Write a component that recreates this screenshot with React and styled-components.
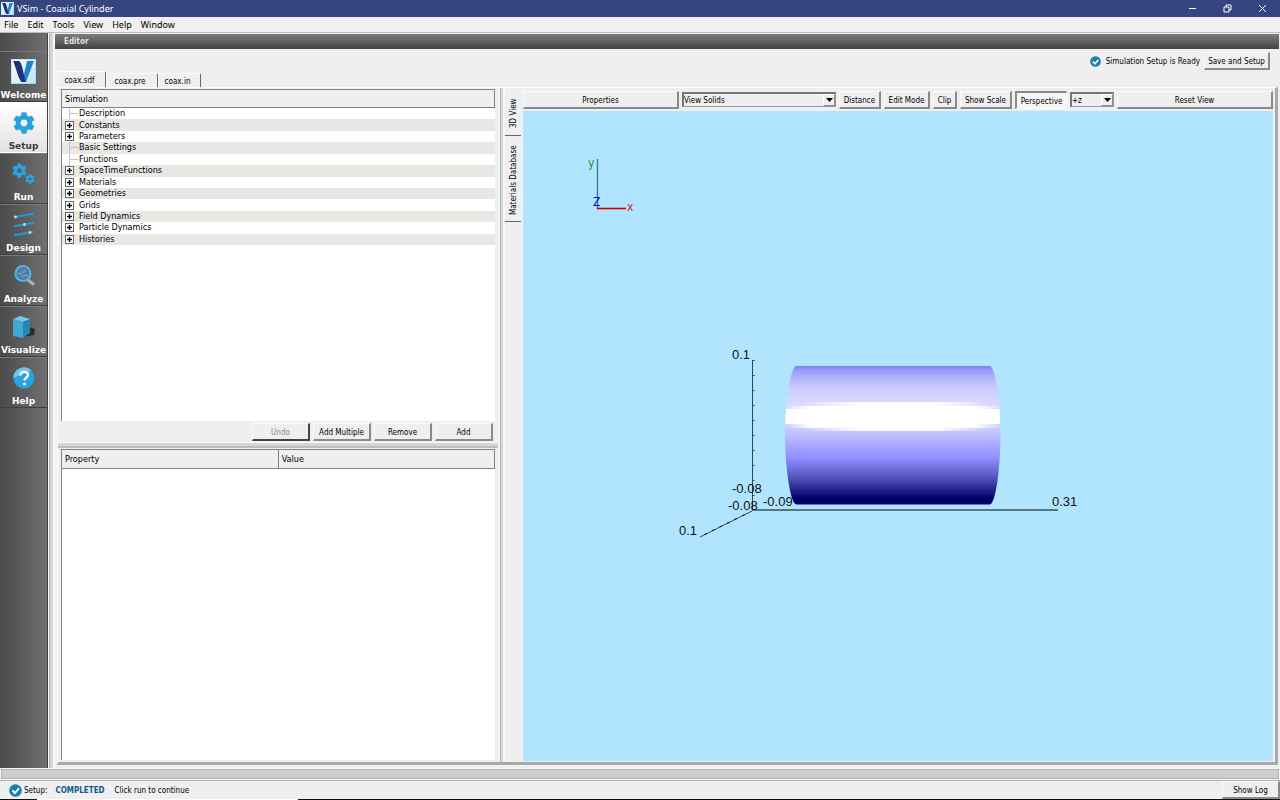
import React, { useState } from "react";
import styled, { createGlobalStyle, css } from "styled-components";
import { FaCog } from "react-icons/fa";

const sideItems = ["Welcome", "Setup", "Run", "Design", "Analyze", "Visualize", "Help"];

const treeItems = [
  { name: "Description" },
  { name: "Constants", expandable: true },
  { name: "Parameters", expandable: true },
  { name: "Basic Settings" },
  { name: "Functions" },
  { name: "SpaceTimeFunctions", expandable: true },
  { name: "Materials", expandable: true },
  { name: "Geometries", expandable: true },
  { name: "Grids", expandable: true },
  { name: "Field Dynamics", expandable: true },
  { name: "Particle Dynamics", expandable: true },
  { name: "Histories", expandable: true },
];

const Logo = ({ size }) => (
  <svg width={size} height={size} viewBox="0 0 24 24">
    <defs>
      <linearGradient id="logoBg" x1="0" y1="0" x2="1" y2="1">
        <stop offset="0" stopColor="#ffffff" />
        <stop offset="1" stopColor="#b9e2f5" />
      </linearGradient>
    </defs>
    <rect width="24" height="24" fill="url(#logoBg)" stroke="#8fd0ee" />
    <path d="M15.500 2h6.500l-7.500 20h-4z" fill="#1b86cc" />
    <path d="M2 2h6c2 2 2.500 5 3.500 9l2.500 11h-4c-3-3-5-13-8-20z" fill="#23307c" />
  </svg>
);

const SideIcon = ({ name }) => {
  if (name === "Welcome") return <Logo size={25} />;
  if (name === "Setup") return <FaCog size={22} color="#29a3df" />;
  if (name === "Run")
    return (
      <GearPair>
        <FaCog size={15} />
        <FaCog size={10} />
      </GearPair>
    );
  if (name === "Design")
    return (
      <svg width="24" height="24" viewBox="0 0 24 24">
        <g stroke="#1f9bdb" strokeWidth="1.8" strokeLinecap="round">
          <path d="M3 4l18-3M3 13l18-3M3 22l18-3" />
        </g>
        <g fill="#d8d2cc">
          <circle cx="3.500" cy="4" r="1.400" />
          <circle cx="12.500" cy="11.500" r="1.400" />
          <circle cx="18" cy="19.500" r="1.400" />
        </g>
      </svg>
    );
  if (name === "Analyze")
    return (
      <svg width="24" height="24" viewBox="0 0 24 24">
        <path d="M15 15l6 5" stroke="#b5aea6" strokeWidth="3.200" strokeLinecap="round" />
        <circle cx="11" cy="9.500" r="7.500" fill="#5b7896" stroke="#4db8ee" strokeWidth="2" />
        <circle cx="11" cy="9.500" r="4" fill="none" stroke="#3d9ad0" strokeDasharray="3 2" />
        <path d="M6 9l4 1 3-4M9 13l4-2 3 1" stroke="#7fc4e8" fill="none" strokeWidth="0.8" />
      </svg>
    );
  if (name === "Visualize")
    return (
      <svg width="25" height="25" viewBox="0 0 25 25">
        <path d="M12 23l11-2 1-6-6-2z" fill="#2b2b2b" />
        <path d="M2 5l7-3 10 3-7 3z" fill="#6fcbf2" />
        <path d="M2 5l10 3v16l-10-2z" fill="#45a6d3" />
        <path d="M12 8l7-3v14l-7 5z" fill="#2585b3" />
      </svg>
    );
  return (
    <svg width="24" height="24" viewBox="0 0 24 24">
      <circle cx="12" cy="12" r="10.500" fill="#27a3e0" />
      <path d="M1.500 12a10.500 10.500 0 0 1 18-7.500z" fill="#6cc6f0" />
      <path d="M8.500 9.500c0-5 7.500-4.500 7.500-.5 0 2.500-3.500 2.500-3.500 5.500" fill="none" stroke="#fff" strokeWidth="2.400" />
      <circle cx="12.500" cy="18" r="1.500" fill="#fff" />
    </svg>
  );
};

const Check = ({ size }) => (
  <svg width={size} height={size} viewBox="0 0 12 12">
    <circle cx="6" cy="6" r="5.800" fill="#1c7fae" />
    <path d="M3.200 6l2.200 2.400 3.800-4.400" fill="none" stroke="#fff" strokeWidth="1.800" />
  </svg>
);

const Combo = ({ label, options, width }) => (
  <ComboBox $width={width}>
    <select aria-label={label}>
      {options.map((o) => (
        <option key={o}>{o}</option>
      ))}
    </select>
    <Arrow>
      <svg width="7" height="4" viewBox="0 0 7 4">
        <path d="M0 0h7l-3.500 4z" fill="#000" />
      </svg>
    </Arrow>
  </ComboBox>
);

const Scene = () => (
  <svg viewBox="0 0 750 650" width="100%" height="100%">
    <defs>
      <linearGradient id="shade" x1="0" y1="0" x2="0" y2="1">
        <stop offset="0" stopColor="#8080f4" />
        <stop offset="0.04" stopColor="#9e9efc" />
        <stop offset="0.1" stopColor="#b9b9fb" />
        <stop offset="0.18" stopColor="#cfcffd" />
        <stop offset="0.3" stopColor="#dcdcff" />
        <stop offset="0.44" stopColor="#ccccff" />
        <stop offset="0.52" stopColor="#b6b6ff" />
        <stop offset="0.66" stopColor="#9090ff" />
        <stop offset="0.78" stopColor="#5f5fc8" />
        <stop offset="0.88" stopColor="#2a2a90" />
        <stop offset="0.95" stopColor="#00006c" />
        <stop offset="1" stopColor="#000068" />
      </linearGradient>
      <linearGradient id="wide">
        <stop offset="0" stopColor="#fff" stopOpacity="0" />
        <stop offset="0.12" stopColor="#fff" />
        <stop offset="0.88" stopColor="#fff" />
        <stop offset="1" stopColor="#fff" stopOpacity="0" />
      </linearGradient>
      <linearGradient id="inner">
        <stop offset="0.08" stopColor="#fff" stopOpacity="0" />
        <stop offset="0.34" stopColor="#fff" />
        <stop offset="0.7" stopColor="#fff" />
        <stop offset="0.94" stopColor="#fff" stopOpacity="0" />
      </linearGradient>
      <clipPath id="body">
        <path d="M273 255H467C473 257 477.500 294 477.500 324S473 392 467 393.500H273C267 392 262 354 262 324S267 257 273 255Z" />
      </clipPath>
    </defs>
    {/* orientation marker */}
    <path d="M74.500 48v50" stroke="#3f7f78" strokeWidth="1.400" />
    <path d="M74 97.500h29" stroke="#d40000" strokeWidth="1.600" />
    <Axis x="65" y="56" fill="#129a2c">y</Axis>
    <Axis x="70" y="95" fill="#0a0ae0">Z</Axis>
    <Axis x="104" y="100" fill="#ee1616">x</Axis>
    {/* bounding axes */}
    <g stroke="#2f4a52" strokeWidth="1" fill="none">
      <path d="M229.500 249v150" />
      <path d="M229 399h306" stroke="#34545a" strokeWidth="1.400" />
      <path d="M229 400l-52 26" />
      {[0, 1, 2, 3, 4, 5, 6, 7, 8, 9].map((i) => (
        <path key={i} d={`M229 ${249.5 + i * 15}h2.500`} />
      ))}
      {[1, 2, 3, 4, 5, 6].map((i) => (
        <path key={i} d={`M${229 - i * 7.5} ${400 + i * 3.75}l-2.500 1`} stroke="#000" />
      ))}
    </g>
    <g clipPath="url(#body)">
      <rect x="262" y="255" width="216" height="139" fill="url(#shade)" />
      <rect x="262" y="298" width="216" height="15" fill="#fff" />
      <rect x="262" y="295" width="216" height="22" fill="url(#wide)" />
      <rect x="262" y="291" width="216" height="29" fill="url(#inner)" />
    </g>
    <Tick x="209" y="248">0.1</Tick>
    <Tick x="209" y="382">-0.08</Tick>
    <Tick x="205" y="399">-0.08</Tick>
    <Tick x="240" y="395">-0.09</Tick>
    <Tick x="529" y="395">0.31</Tick>
    <Tick x="156" y="424">0.1</Tick>
  </svg>
);

export default function App() {
  const [active, setActive] = useState("Setup");

  return (
    <>
      <GlobalStyle />
      <Window>
        <TitleBar>
          <Logo size={13} />
          <Title>VSim - Coaxial Cylinder</Title>
          <WinButton aria-label="Minimize">
            <svg width="9" height="9" viewBox="0 0 9 9"><path d="M1 4.500h7" /></svg>
          </WinButton>
          <WinButton aria-label="Restore">
            <svg width="9" height="9" viewBox="0 0 9 9"><path d="M1 3h5v5h-5zM3 3v-2h5v5h-2" /></svg>
          </WinButton>
          <WinButton aria-label="Close">
            <svg width="9" height="9" viewBox="0 0 9 9"><path d="M1 1l7 7M8 1l-7 7" /></svg>
          </WinButton>
        </TitleBar>
        <MenuBar>
          {["File", "Edit", "Tools", "View", "Help", "Window"].map((m) => (
            <MenuItem key={m}>{m}</MenuItem>
          ))}
        </MenuBar>
        <Body>
          <Sidebar>
            {sideItems.map((name) => (
              <SideButton key={name} $active={name === active} onClick={() => setActive(name)}>
                <IconBox>
                  <SideIcon name={name} />
                </IconBox>
                {name}
              </SideButton>
            ))}
          </Sidebar>
          <Splitter />
          <Main>
            <EditorBar>Editor</EditorBar>
            <ReadyRow>
              <Check size={11} />
              <ReadyText>Simulation Setup is Ready</ReadyText>
              <Button $width={66}>Save and Setup</Button>
            </ReadyRow>
            <FileTabs>
              <FileTab $width={49} $active>coax.sdf</FileTab>
              <FileTab $width={52}>coax.pre</FileTab>
              <FileTab $width={43}>coax.in</FileTab>
            </FileTabs>
            <Frame>
              <LeftPane>
                <TreeBox>
                  <TreeHeader>Simulation</TreeHeader>
                  <Tree>
                    {treeItems.map((item) => (
                      <TreeRow key={item.name}>
                        {item.expandable ? (
                          <Expander aria-label={`Expand ${item.name}`}>
                            <svg width="5" height="5" viewBox="0 0 5 5">
                              <path d="M0 2.500h5M2.500 0v5" stroke="#000" strokeWidth="1.400" />
                            </svg>
                          </Expander>
                        ) : (
                          <Branch />
                        )}
                        {item.name}
                      </TreeRow>
                    ))}
                  </Tree>
                </TreeBox>
                <ButtonRow>
                  <Button $width={58} disabled>Undo</Button>
                  <Button $width={58}>Add Multiple</Button>
                  <Button $width={58}>Remove</Button>
                  <Button $width={58}>Add</Button>
                </ButtonRow>
                <HSplitter />
                <PropertyBox>
                  <PropertyTable>
                    <thead>
                      <tr>
                        <th>Property</th>
                        <th>Value</th>
                      </tr>
                    </thead>
                  </PropertyTable>
                </PropertyBox>
              </LeftPane>
              <Splitter $narrow />
              <SideTabs>
                <SideTab $height={48}>3D View</SideTab>
                <SideTab $height={86}>Materials Database</SideTab>
              </SideTabs>
              <ViewPane>
                <Toolbar>
                  <Button $grow>Properties</Button>
                  <Combo label="View mode" options={["View Solids", "View Grid"]} width={154} />
                  <Button $width={42}>Distance</Button>
                  <Button $width={46}>Edit Mode</Button>
                  <Button $width={24}>Clip</Button>
                  <Button $width={52}>Show Scale</Button>
                  <Button $width={52} $pressed>Perspective</Button>
                  <Combo label="View direction" options={["+z", "-z"]} width={44} />
                  <Button $grow>Reset View</Button>
                </Toolbar>
                <Canvas>
                  <Scene />
                </Canvas>
              </ViewPane>
            </Frame>
          </Main>
        </Body>
        <LogSplitter />
        <StatusBar>
          <Check size={13} />
          <span>Setup:</span>
          <Completed>COMPLETED</Completed>
          <span>Click run to continue</span>
          <Button $width={58}>Show Log</Button>
        </StatusBar>
        <Taskbar />
      </Window>
    </>
  );
}

const GlobalStyle = createGlobalStyle`
  * {
    box-sizing: border-box;
  }
  body {
    margin: 0;
    overflow: hidden;
    background: #efefef;
  }
  body, button, select {
    font-family: "DejaVu Sans Condensed", "DejaVu Sans", sans-serif;
    font-size: 8px;
    color: #000;
  }
  svg {
    display: block;
    flex: none;
  }
`;

const Window = styled.div`
  display: flex;
  flex-direction: column;
  height: 100vh;
`;

const TitleBar = styled.header`
  display: flex;
  align-items: center;
  height: 17px;
  padding-left: 1px;
  background: #35457f;
  color: #fff;
`;

const Title = styled.h1`
  flex: 1;
  margin: 0 0 0 3px;
  font-family: "Noto Sans", sans-serif;
  font-size: 9px;
  font-weight: 400;
`;

const WinButton = styled.button`
  display: flex;
  align-items: center;
  justify-content: center;
  width: 35px;
  height: 17px;
  border: 0;
  background: transparent;

  path {
    fill: none;
    stroke: #fff;
  }
`;

const MenuBar = styled.nav`
  display: flex;
  align-items: center;
  gap: 9px;
  height: 16px;
  padding-left: 4px;
  background: #f0f0f0;
  border-bottom: 1px solid #bdbdbd;
`;

const MenuItem = styled.button`
  padding: 0;
  border: 0;
  background: transparent;
  font-family: "Noto Sans", sans-serif;
  font-size: 9px;
`;

const Body = styled.div`
  display: flex;
  flex: 1;
  min-height: 0;
`;

const Sidebar = styled.aside`
  width: 48px;
  padding-top: 18px;
  background: linear-gradient(90deg, #4a4a4a, #707070);
  border-right: 1px solid #404040;
`;

const SideButton = styled.button`
  display: flex;
  flex-direction: column;
  align-items: center;
  width: 47px;
  height: 51px;
  padding: 0;
  border: 0;
  border-top: 1px solid #7a7a7a;
  border-bottom: 1px solid #404040;
  background: transparent;
  color: #fff;
  font-family: "DejaVu Sans", sans-serif;
  font-size: 9px;
  font-weight: 700;
  line-height: 12px;

  ${(p) =>
    p.$active &&
    css`
      background: linear-gradient(#ffffff, #e2e2e2);
      border-color: #fff;
      color: #3c3c3c;
    `}
`;

const IconBox = styled.span`
  display: flex;
  align-items: center;
  justify-content: center;
  height: 38px;
  padding-top: 2px;
`;

const GearPair = styled.span`
  display: flex;
  align-items: flex-end;
  color: #29a3df;

  svg:first-child {
    margin: 0 -2px 6px 0;
  }
`;

const Splitter = styled.div`
  width: ${(p) => (p.$narrow ? 6 : 7)}px;
  border: solid #f8f8f8;
  border-width: 0 2px 0 1px;
  background: linear-gradient(90deg, #b4b4b4 1px, #d4d4d4 1px);
`;

const Main = styled.main`
  display: flex;
  flex: 1;
  flex-direction: column;
  min-width: 0;
  padding: 1px 1px 3px 0;
  background: #efefef;
`;

const EditorBar = styled.div`
  height: 15px;
  padding-left: 9px;
  background: linear-gradient(#7d7d7d, #434343);
  color: #e0e0e0;
  font-size: 8px;
  font-weight: 700;
  line-height: 16px;
`;

const Button = styled.button`
  flex: ${(p) => (p.$grow ? "1" : "none")};
  width: ${(p) => (p.$width ? p.$width + "px" : "auto")};
  height: 18px;
  padding: 2px 0 0;
  border: solid;
  border-width: 1px 2px 2px 1px;
  border-color: #fbfbfb #8a8a8a #8a8a8a #fbfbfb;
  background: #efefef;
  white-space: nowrap;

  &:disabled {
    color: #8c8c8c;
    border-right-color: #444;
    border-bottom-color: #444;
  }

  ${(p) =>
    p.$pressed &&
    css`
      border-width: 2px 1px 1px 2px;
      border-color: #8a8a8a #fbfbfb #fbfbfb #8a8a8a;
      background: #f6f6f6;
    `}
`;

const ReadyRow = styled.div`
  display: flex;
  align-items: center;
  justify-content: flex-end;
  height: 24px;
  padding-right: 9px;
`;

const ReadyText = styled.span`
  margin: 0 4px 0 5px;
`;

const FileTabs = styled.div`
  display: flex;
  align-items: flex-end;
  height: 14px;
  padding-left: 2px;
`;

const FileTab = styled.button`
  width: ${(p) => p.$width}px;
  height: ${(p) => (p.$active ? 16 : 14)}px;
  padding: 1px 4px 0 0;
  border: solid #fbfbfb;
  border-width: 1px 1px 0 1px;
  border-right-color: #666;
  border-radius: 2px 2px 0 0;
  background: #efefef;
`;

const Frame = styled.div`
  display: flex;
  flex: 1;
  min-height: 0;
  margin: 0 1px 0 2px;
  border: solid;
  border-width: 1px 3px 3px 1px;
  border-color: #fbfbfb #a8a8a8 #a8a8a8 #fbfbfb;
`;

const LeftPane = styled.section`
  display: flex;
  flex-direction: column;
  width: 441px;
`;

const TreeBox = styled.div`
  height: 332px;
  margin: 1px 4px 0 3px;
  border: solid #828282;
  border-width: 1px 0 0 1px;
  background: #fff;
`;

const TreeHeader = styled.div`
  height: 18px;
  padding-left: 3px;
  border: 1px solid #828282;
  border-width: 0 1px 1px 0;
  background: #efefef;
  font-size: 9px;
  line-height: 18px;
`;

const Tree = styled.div`
  display: grid;
  grid-template-rows: repeat(12, 1fr);
  height: 137px;
`;

const TreeRow = styled.div`
  display: flex;
  align-items: center;
  gap: 5px;
  min-height: 0;
  padding-left: 3px;
  font-size: 9px;
  line-height: 11px;

  &:nth-child(even) {
    background: #e8e7e3;
  }
`;

const Expander = styled.button`
  display: flex;
  align-items: center;
  justify-content: center;
  width: 9px;
  height: 9px;
  padding: 0;
  border: 1px solid #666;
  background: #fff;
`;

const Branch = styled.span`
  align-self: stretch;
  width: 9px;
  border-left: 1px solid #c4c4c4;
  margin-left: 4px;
  margin-right: -4px;
  background: linear-gradient(#c4c4c4, #c4c4c4) center / 100% 1px no-repeat;
`;

const ButtonRow = styled.div`
  display: flex;
  justify-content: flex-end;
  gap: 3px;
  padding: 2px 6px 1px 0;
`;

const HSplitter = styled.div`
  height: 6px;
  margin-right: 1px;
  border-top: 1px solid #fbfbfb;
  border-bottom: 2px solid #bdbdbd;
  background: #d6d6d6;
`;

const PropertyBox = styled.div`
  flex: 1;
  margin: 1px 4px 2px 3px;
  border: solid #828282;
  border-width: 1px 0 0 1px;
  background: #fff;
`;

const PropertyTable = styled.table`
  width: 100%;
  border-collapse: collapse;
  table-layout: fixed;

  th {
    height: 18px;
    padding: 1px 3px 0;
    border: solid #828282;
    border-width: 0 1px 1px 0;
    background: #efefef;
    font-size: 9px;
    font-weight: 400;
    text-align: left;
  }
`;

const SideTabs = styled.div`
  width: 18px;
  padding-right: 1px;
`;

const SideTab = styled.button`
  display: block;
  width: 16px;
  height: ${(p) => p.$height}px;
  padding: 0 0 3px;
  border: 0;
  border-top: 1px solid #666;
  background: #efefef;
  white-space: nowrap;
  writing-mode: vertical-rl;
  transform: rotate(180deg);
`;

const ViewPane = styled.section`
  display: flex;
  flex: 1;
  flex-direction: column;
  min-width: 0;
  padding: 3px 2px 1px 0;
`;

const Toolbar = styled.div`
  display: flex;
  gap: 3px;
  height: 20px;
`;

const ComboBox = styled.span`
  display: flex;
  width: ${(p) => p.$width}px;
  height: 15px;
  margin-top: 1px;
  border: solid;
  border-width: 2px 1px 1px 2px;
  border-color: #777 #999 #999 #777;

  select {
    flex: 1;
    min-width: 0;
    padding: 1px 0 0;
    border: 0;
    appearance: none;
    background: #efefef;
  }
`;

const Arrow = styled.span`
  display: flex;
  align-items: center;
  justify-content: center;
  width: 12px;
  border: 1px solid #8a8a8a;
  border-top-color: #fff;
  border-left-color: #fff;
  background: #efefef;
`;

const Canvas = styled.div`
  flex: 1;
  min-height: 0;
  background: #b1e4ff;
`;

const Axis = styled.text`
  font-family: "DejaVu Sans Condensed", sans-serif;
  font-size: 12px;
`;

const Tick = styled.text`
  font-family: "Liberation Sans", Arial, sans-serif;
  font-size: 13px;
  fill: #111;
`;

const LogSplitter = styled.div`
  height: 12px;
  border: solid #f8f8f8;
  border-width: 2px 1px;
  outline: 1px solid #b0b0b0;
  outline-offset: -2px;
  background: #cdcdcd;
`;

const StatusBar = styled.footer`
  display: flex;
  align-items: center;
  height: 19px;
  padding-left: 9px;
  border-top: 1px solid #b0b0b0;
  background: #efefef;

  span {
    margin-left: 2px;
  }
  button {
    margin-left: auto;
  }
`;

const Completed = styled.b`
  margin: 0 8px;
  color: #0c5a8c;
`;

const Taskbar = styled.div`
  height: 1px;
  background: linear-gradient(90deg, #111 37px, #fff 37px, #fff 298px, #111 298px);
`;
